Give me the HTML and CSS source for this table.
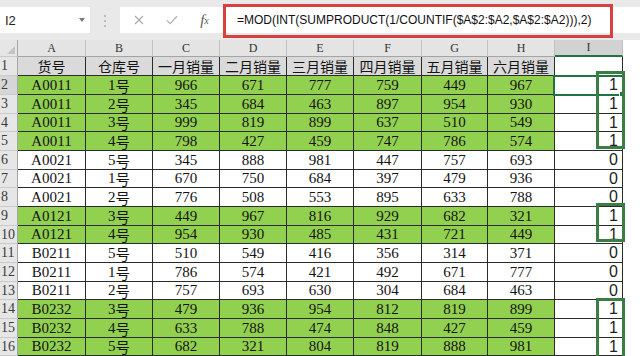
FILE: index.html
```html
<!DOCTYPE html>
<html lang="zh">
<head>
<meta charset="utf-8">
<title>Excel</title>
<link rel="stylesheet" href="styles.css">
</head>
<body>
<div class="fbar">
  <div class="namebox"><span>I2</span><span class="caret"></span></div>
  <div class="grip"><i></i><i></i><i></i></div>
  <div class="fx-area">
    <div class="fx-icons">
      <span class="ic"><svg width="10" height="10" viewBox="0 0 10 10"><path d="M1 1L9 9M9 1L1 9" stroke="#a9a9a9" stroke-width="1.2" fill="none"/></svg></span>
      <span class="ic"><svg width="12" height="10" viewBox="0 0 12 10"><path d="M1 5.5L4.2 8.6L11 1.2" stroke="#b3b3b3" stroke-width="1.3" fill="none"/></svg></span>
      <span class="ic fx">f<sub>x</sub></span>
    </div>
    <div class="fx-input">=MOD(INT(SUMPRODUCT(1/COUNTIF($A$2:$A2,$A$2:$A2))),2)</div>
  </div>
  <div class="redbox"></div>
</div>
<div class="sheet">
  <div class="r hdr"><div class="corner"><span class="tri"></span></div><div>A</div><div>B</div><div>C</div><div>D</div><div>E</div><div>F</div><div>G</div><div>H</div><div class="sel">I</div><div></div></div>
  <div class="r t"><div>1</div><div>货号</div><div>仓库号</div><div>一月销量</div><div>二月销量</div><div>三月销量</div><div>四月销量</div><div>五月销量</div><div>六月销量</div><div class="ci"></div><div></div></div>
  <div class="r g"><div class="rs">2</div><div>A0011</div><div>1<span class="h">号</span></div><div>966</div><div>671</div><div>777</div><div>759</div><div>449</div><div>967</div><div class="ci">1</div><div></div></div>
  <div class="r g"><div>3</div><div>A0011</div><div>2<span class="h">号</span></div><div>345</div><div>684</div><div>463</div><div>897</div><div>954</div><div>930</div><div class="ci">1</div><div></div></div>
  <div class="r g"><div>4</div><div>A0011</div><div>3<span class="h">号</span></div><div>999</div><div>819</div><div>899</div><div>637</div><div>510</div><div>549</div><div class="ci">1</div><div></div></div>
  <div class="r g"><div>5</div><div>A0011</div><div>4<span class="h">号</span></div><div>798</div><div>427</div><div>459</div><div>747</div><div>786</div><div>574</div><div class="ci">1</div><div></div></div>
  <div class="r"><div>6</div><div>A0021</div><div>5<span class="h">号</span></div><div>345</div><div>888</div><div>981</div><div>447</div><div>757</div><div>693</div><div class="ci">0</div><div></div></div>
  <div class="r"><div>7</div><div>A0021</div><div>1<span class="h">号</span></div><div>670</div><div>750</div><div>684</div><div>397</div><div>479</div><div>936</div><div class="ci">0</div><div></div></div>
  <div class="r"><div>8</div><div>A0021</div><div>2<span class="h">号</span></div><div>776</div><div>508</div><div>553</div><div>895</div><div>633</div><div>788</div><div class="ci">0</div><div></div></div>
  <div class="r g"><div>9</div><div>A0121</div><div>3<span class="h">号</span></div><div>449</div><div>967</div><div>816</div><div>929</div><div>682</div><div>321</div><div class="ci">1</div><div></div></div>
  <div class="r g"><div>10</div><div>A0121</div><div>4<span class="h">号</span></div><div>954</div><div>930</div><div>485</div><div>431</div><div>721</div><div>449</div><div class="ci">1</div><div></div></div>
  <div class="r"><div>11</div><div>B0211</div><div>5<span class="h">号</span></div><div>510</div><div>549</div><div>416</div><div>356</div><div>314</div><div>371</div><div class="ci">0</div><div></div></div>
  <div class="r"><div>12</div><div>B0211</div><div>1<span class="h">号</span></div><div>786</div><div>574</div><div>421</div><div>492</div><div>671</div><div>777</div><div class="ci">0</div><div></div></div>
  <div class="r"><div>13</div><div>B0211</div><div>2<span class="h">号</span></div><div>757</div><div>693</div><div>630</div><div>304</div><div>684</div><div>463</div><div class="ci">0</div><div></div></div>
  <div class="r g"><div>14</div><div>B0232</div><div>3<span class="h">号</span></div><div>479</div><div>936</div><div>954</div><div>812</div><div>819</div><div>899</div><div class="ci">1</div><div></div></div>
  <div class="r g"><div>15</div><div>B0232</div><div>4<span class="h">号</span></div><div>633</div><div>788</div><div>474</div><div>848</div><div>427</div><div>459</div><div class="ci">1</div><div></div></div>
  <div class="r g"><div>16</div><div>B0232</div><div>5<span class="h">号</span></div><div>682</div><div>321</div><div>804</div><div>819</div><div>888</div><div>981</div><div class="ci">1</div><div></div></div>

  <div class="selcell"></div>
  <div class="handle"></div>
  <div class="box box1"></div>
  <div class="box box2"></div>
  <div class="box box3"></div>
</div>
</body>
</html>
```
FILE: styles.css
```css
* { box-sizing: border-box; margin: 0; padding: 0; }
body {
  width: 640px;
  height: 356px;
  overflow: hidden;
  background: #fff;
  font-family: "Liberation Serif", "Noto Sans CJK SC", serif;
}

/* formula bar */
.fbar {
  position: relative;
  height: 40px;
  background: #e9e9e9;
  display: flex;
  align-items: flex-start;
  padding-top: 7px;
}
.namebox {
  width: 90px;
  height: 26px;
  background: #fff;
  display: flex;
  align-items: center;
  justify-content: space-between;
  padding: 0 5px 0 5px;
  font: 13px "Liberation Sans", sans-serif;
  color: #222;
}
.caret {
  width: 0; height: 0;
  border-left: 3px solid transparent;
  border-right: 3px solid transparent;
  border-top: 4px solid #7a7a7a;
}
.grip {
  width: 30px;
  height: 26px;
  display: flex;
  flex-direction: column;
  align-items: center;
  gap: 3px;
  padding-top: 8px;
}
.grip i { display: block; width: 2px; height: 2px; background: #bcbcbc; }
.fx-area {
  flex: 1;
  height: 26px;
  background: #fff;
  display: flex;
  align-items: center;
}
.fx-icons {
  width: 102px;
  display: flex;
  align-items: center;
  padding-left: 2px;
}
.ic {
  width: 33px;
  display: flex;
  justify-content: center;
  align-items: center;
}
.fx {
  font: italic 15px "Liberation Serif", serif;
  color: #5a5a5a;
}
.fx sub { font-size: 10px; vertical-align: -2px; }
.fx-input {
  padding-left: 15px;
  font: 12px "Liberation Sans", sans-serif;
  color: #111;
  white-space: nowrap;
}
.redbox {
  position: absolute;
  left: 223px;
  top: 4px;
  width: 390px;
  height: 34px;
  border: 3px solid #d8403e;
}

/* sheet */
.sheet {
  position: relative;
  display: flex;
  flex-direction: column;
}
.r {
  display: grid;
  grid-template-columns: 18px 68px 67px 67px 67px 67px 68px 66px 67px 68px 1fr;
  height: 19px;
}
.r:nth-child(3n+5) { height: 18px; }
.r > div {
  border-right: 1px solid #2b2b2b;
  border-bottom: 1px solid #2b2b2b;
  display: flex;
  align-items: center;
  justify-content: center;
  font-size: 15px;
  color: #141414;
  white-space: nowrap;
  overflow: hidden;
}
.h {
  font-size: 14.5px;
  vertical-align: 2px;
}
.r > div:first-child {
  background: #e6e6e6;
  border-right-color: #a5a5a5;
  border-bottom-color: #cacaca;
  justify-content: flex-start;
  padding-left: 1px;
  font-size: 14px;
  color: #3a3a3a;
}
.r > div.rs { background: #d6d6d6; }
.r > div:last-child { border: none; background: #fff; }

.r.hdr { height: 17px; }
.hdr > div {
  background: #e4e4e4;
  border-right-color: #c2c2c2;
  border-bottom-color: #a4a4a4;
  font-size: 12px;
  color: #333;
}
.hdr > div.sel {
  background: #d2d2d2;
  border-bottom: 2px solid #217346;
}
.hdr > .corner { position: relative; }
.tri {
  position: absolute;
  right: 2px;
  bottom: 2px;
  width: 0; height: 0;
  border-left: 8px solid transparent;
  border-bottom: 8px solid #c4c4c4;
}

.t > div:nth-child(n+2):nth-child(-n+9) {
  background: #dadada;
  font-size: 14px;
}
.g > div:nth-child(n+2):nth-child(-n+9) { background: #92d050; }

.r > .ci {
  justify-content: flex-end;
  padding-right: 4px;
  font: 16px "Liberation Sans", sans-serif;
  color: #222;
  background: #fff;
}

/* overlays */
.selcell {
  position: absolute;
  left: 553px;
  top: 35px;
  width: 71px;
  height: 21px;
  border: 2px solid #217346;
}
.handle {
  position: absolute;
  left: 619px;
  top: 51px;
  width: 6px;
  height: 6px;
  background: #217346;
  border: 1px solid #fff;
}
.box {
  position: absolute;
  left: 596px;
  width: 29px;
  border: 3px solid #3b7d45;
}
.box1 { top: 31px; height: 78px; }
.box2 { top: 163px; height: 39px; }
.box3 { top: 258px; height: 70px; }
```
